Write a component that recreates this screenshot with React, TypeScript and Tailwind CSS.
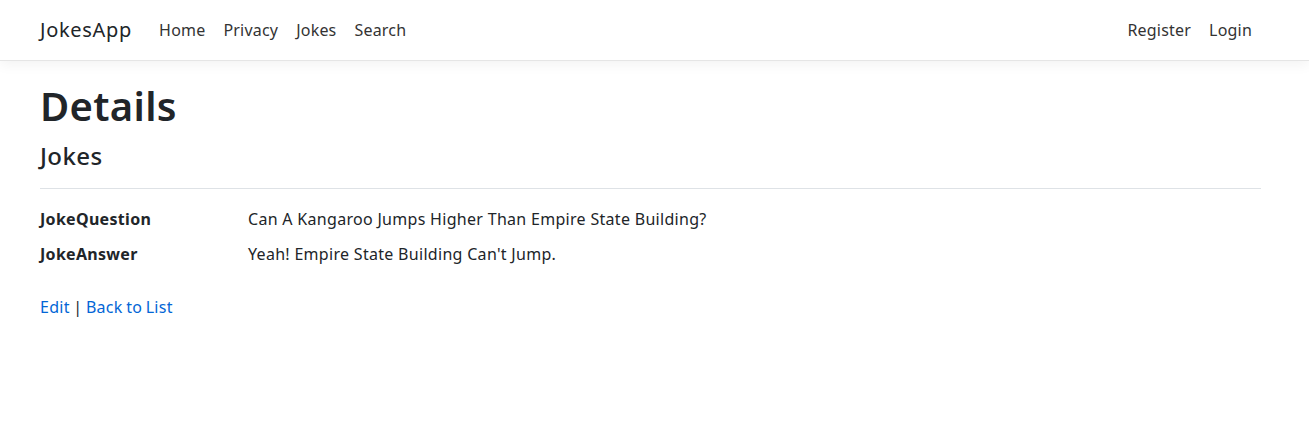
export default function App() {
  const navLink = 'px-[9px] text-[16px] tracking-[0.2px] text-[#333333] hover:text-black';
  return (
    <div className="min-h-screen bg-white font-['Noto_Sans',sans-serif] text-[#212529]">
      <header className="h-[61px] border-b border-[#e5e5e5] bg-white shadow-[0_4px_12px_rgba(0,0,0,0.05)]">
        <nav className="flex h-full items-center pl-10 pr-12">
          <a href="#" className="mr-[18px] text-[20px] tracking-[0.7px] text-[#212529]">JokesApp</a>
          <div className="flex flex-1 items-center">
            <a href="#" className={navLink}>Home</a>
            <a href="#" className={navLink}>Privacy</a>
            <a href="#" className={navLink}>Jokes</a>
            <a href="#" className={navLink}>Search</a>
          </div>
          <div className="flex items-center">
            <a href="#" className={navLink}>Register</a>
            <a href="#" className={navLink}>Login</a>
          </div>
        </nav>
      </header>

      <main className="pl-10 pr-12 pt-[21px]">
        <h1 className="mb-[11px] text-[40px] font-semibold leading-[48px] tracking-[0.3px]">Details</h1>
        <div>
          <h4 className="mb-2 text-[24px] font-medium leading-[29px] tracking-[0.4px]">Jokes</h4>
          <hr className="mt-[18px] mb-[18px] border-t border-[#dee2e6]" />
          <dl className="grid grid-cols-[208px_1fr] text-[16px] leading-6 tracking-[0.3px]">
            <dt className="mb-[11px] font-bold">JokeQuestion</dt>
            <dd className="mb-[11px]">Can A Kangaroo Jumps Higher Than Empire State Building?</dd>
            <dt className="mb-2 font-bold">JokeAnswer</dt>
            <dd className="mb-2">Yeah! Empire State Building Can't Jump.</dd>
          </dl>
        </div>
        <div className="mt-[21px] text-[16px] leading-6 tracking-[0.3px] [word-spacing:-1px]">
          <a href="#" className="text-[#0366d6]">Edit</a> |{' '}
          <a href="#" className="text-[#0366d6]">Back to List</a>
        </div>
      </main>
    </div>
  );
}
